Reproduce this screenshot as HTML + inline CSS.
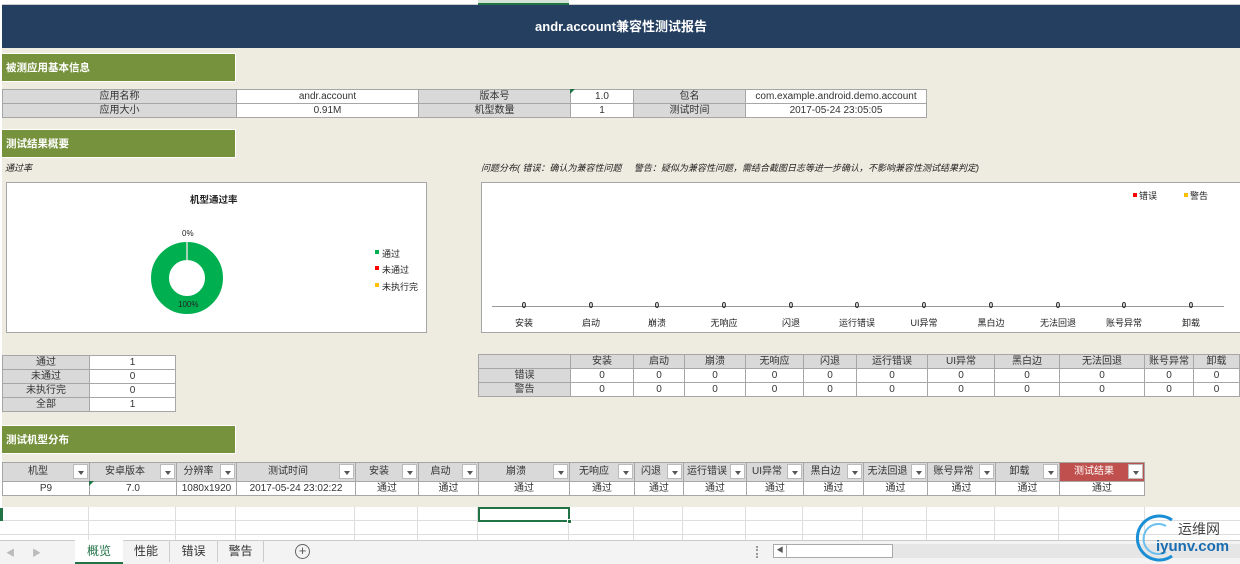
<!DOCTYPE html>
<html><head><meta charset="utf-8"><style>
*{margin:0;padding:0;box-sizing:border-box}
body{width:1240px;height:564px;background:#eeebe0;position:relative;overflow:hidden;font-family:"Liberation Sans","Noto Sans CJK SC",sans-serif;font-size:10px;color:#333}
.a{position:absolute}
.c{position:absolute;text-align:center;line-height:13px;white-space:nowrap;overflow:hidden;border:1px solid #a6a6a6}
.g{background:#d9d9d9}
.w{background:#fff}
.gb{position:absolute;background:#76923c;color:#fff;font-weight:bold;font-size:10.5px;line-height:28px;padding-left:4px;border:1px solid #fff;border-left:none}
.h{position:absolute;background:#d9d9d9;border:1px solid #a6a6a6;line-height:17px;font-size:10px;text-align:center;white-space:nowrap;overflow:hidden;padding-right:16px}
.dd{position:absolute;right:1px;top:1px;width:15px;height:15px;background:#fff;border:1px solid #bbb}
.dd:after{content:"";position:absolute;left:4px;top:6px;border-left:3px solid transparent;border-right:3px solid transparent;border-top:4px solid #555}
.d{position:absolute;background:#fff;border:1px solid #a6a6a6;line-height:13px;text-align:center;font-size:10px}
.lab{position:absolute;font-size:9px;color:#222;text-align:center;width:60px}
</style></head><body>
<!-- column header strip -->
<div class="a" style="left:0;top:0;width:1240px;height:5px;background:#fff;border-bottom:1px solid #ccc"></div>
<div class="a" style="left:478px;top:0;width:91px;height:5px;background:#d3e4d6;border-bottom:2px solid #217346"></div>
<!-- title -->
<div class="a" style="left:2px;top:5px;width:1238px;height:43px;background:#243f60;color:#fff;font-weight:bold;font-size:13px;line-height:43px;text-align:center">andr.account兼容性测试报告</div>
<div class="a" style="left:0;top:0;width:2px;height:564px;background:#fff"></div>

<div class="gb" style="left:2px;top:53px;width:234px;height:29px">被测应用基本信息</div>
<div class="c g" style="left:2px;top:89px;width:235px;height:15px">应用名称</div>
<div class="c w" style="left:236px;top:89px;width:183px;height:15px">andr.account</div>
<div class="c g" style="left:418px;top:89px;width:153px;height:15px">版本号</div>
<div class="c w" style="left:570px;top:89px;width:64px;height:15px">1.0</div>
<div class="c g" style="left:633px;top:89px;width:113px;height:15px">包名</div>
<div class="c w" style="left:745px;top:89px;width:182px;height:15px">com.example.android.demo.account</div>
<div class="c g" style="left:2px;top:103px;width:235px;height:15px">应用大小</div>
<div class="c w" style="left:236px;top:103px;width:183px;height:15px">0.91M</div>
<div class="c g" style="left:418px;top:103px;width:153px;height:15px">机型数量</div>
<div class="c w" style="left:570px;top:103px;width:64px;height:15px">1</div>
<div class="c g" style="left:633px;top:103px;width:113px;height:15px">测试时间</div>
<div class="c w" style="left:745px;top:103px;width:182px;height:15px">2017-05-24 23:05:05</div>

<div class="gb" style="left:2px;top:129px;width:234px;height:29px">测试结果概要</div>
<div class="a" style="left:5px;top:161px;font-size:9px;font-style:italic;color:#222">通过率</div>
<div class="a" style="left:481px;top:161px;font-size:9px;font-style:italic;color:#222">问题分布( 错误：确认为兼容性问题 &nbsp;&nbsp;&nbsp; 警告：疑似为兼容性问题，需结合截图日志等进一步确认，不影响兼容性测试结果判定)</div>

<!-- pie chart -->
<div class="a" style="left:6px;top:182px;width:421px;height:151px;background:#fff;border:1px solid #a6a6a6"></div>
<div class="a" style="left:190px;top:192px;font-size:9.5px;font-weight:bold;color:#222">机型通过率</div>
<svg class="a" style="left:140px;top:225px" width="100" height="100">
<circle cx="47" cy="53" r="27" fill="none" stroke="#00b050" stroke-width="18"/>
<line x1="47" y1="17" x2="47" y2="35" stroke="#ddd" stroke-width="1.5"/>
</svg>
<div class="a" style="left:182px;top:229px;font-size:8px;color:#222">0%</div>
<div class="a" style="left:178px;top:300px;font-size:8px;color:#222">100%</div>
<div class="a" style="left:375px;top:250px;width:4px;height:4px;background:#00b050"></div>
<div class="a" style="left:382px;top:247px;font-size:9px;color:#222">通过</div>
<div class="a" style="left:375px;top:266px;width:4px;height:4px;background:#f00"></div>
<div class="a" style="left:382px;top:263px;font-size:9px;color:#222">未通过</div>
<div class="a" style="left:375px;top:283px;width:4px;height:4px;background:#ffc000"></div>
<div class="a" style="left:382px;top:280px;font-size:9px;color:#222">未执行完</div>

<!-- bar chart -->
<div class="a" style="left:481px;top:182px;width:759px;height:151px;background:#fff;border:1px solid #a6a6a6;border-right:none"></div>
<div class="a" style="left:1133px;top:193px;width:4px;height:4px;background:#f00"></div>
<div class="a" style="left:1139px;top:189px;font-size:9px;color:#222">错误</div>
<div class="a" style="left:1184px;top:193px;width:4px;height:4px;background:#ffc000"></div>
<div class="a" style="left:1190px;top:189px;font-size:9px;color:#222">警告</div>
<div class="a" style="left:492px;top:306px;width:732px;height:1px;background:#999"></div>
<div class="lab" style="left:494px;top:301px;font-size:8px;font-weight:bold">0</div><div class="lab" style="left:494px;top:316px">安装</div>
<div class="lab" style="left:561px;top:301px;font-size:8px;font-weight:bold">0</div><div class="lab" style="left:561px;top:316px">启动</div>
<div class="lab" style="left:627px;top:301px;font-size:8px;font-weight:bold">0</div><div class="lab" style="left:627px;top:316px">崩溃</div>
<div class="lab" style="left:694px;top:301px;font-size:8px;font-weight:bold">0</div><div class="lab" style="left:694px;top:316px">无响应</div>
<div class="lab" style="left:761px;top:301px;font-size:8px;font-weight:bold">0</div><div class="lab" style="left:761px;top:316px">闪退</div>
<div class="lab" style="left:827px;top:301px;font-size:8px;font-weight:bold">0</div><div class="lab" style="left:827px;top:316px">运行错误</div>
<div class="lab" style="left:894px;top:301px;font-size:8px;font-weight:bold">0</div><div class="lab" style="left:894px;top:316px">UI异常</div>
<div class="lab" style="left:961px;top:301px;font-size:8px;font-weight:bold">0</div><div class="lab" style="left:961px;top:316px">黑白边</div>
<div class="lab" style="left:1028px;top:301px;font-size:8px;font-weight:bold">0</div><div class="lab" style="left:1028px;top:316px">无法回退</div>
<div class="lab" style="left:1094px;top:301px;font-size:8px;font-weight:bold">0</div><div class="lab" style="left:1094px;top:316px">账号异常</div>
<div class="lab" style="left:1161px;top:301px;font-size:8px;font-weight:bold">0</div><div class="lab" style="left:1161px;top:316px">卸载</div>

<!-- left small table -->
<div class="c g" style="left:2px;top:355px;width:88px;height:15px">通过</div><div class="c w" style="left:89px;top:355px;width:87px;height:15px">1</div>
<div class="c g" style="left:2px;top:369px;width:88px;height:15px">未通过</div><div class="c w" style="left:89px;top:369px;width:87px;height:15px">0</div>
<div class="c g" style="left:2px;top:383px;width:88px;height:15px">未执行完</div><div class="c w" style="left:89px;top:383px;width:87px;height:15px">0</div>
<div class="c g" style="left:2px;top:397px;width:88px;height:15px">全部</div><div class="c w" style="left:89px;top:397px;width:87px;height:15px">1</div>

<!-- right table -->
<div class="c g" style="left:478px;top:354px;width:93px;height:15px"></div>
<div class="c g" style="left:570px;top:354px;width:64px;height:15px">安装</div>
<div class="c g" style="left:633px;top:354px;width:52px;height:15px">启动</div>
<div class="c g" style="left:684px;top:354px;width:62px;height:15px">崩溃</div>
<div class="c g" style="left:745px;top:354px;width:59px;height:15px">无响应</div>
<div class="c g" style="left:803px;top:354px;width:54px;height:15px">闪退</div>
<div class="c g" style="left:856px;top:354px;width:72px;height:15px">运行错误</div>
<div class="c g" style="left:927px;top:354px;width:68px;height:15px">UI异常</div>
<div class="c g" style="left:994px;top:354px;width:66px;height:15px">黑白边</div>
<div class="c g" style="left:1059px;top:354px;width:86px;height:15px">无法回退</div>
<div class="c g" style="left:1144px;top:354px;width:50px;height:15px">账号异常</div>
<div class="c g" style="left:1193px;top:354px;width:47px;height:15px">卸载</div>

<div class="c g" style="left:478px;top:368px;width:93px;height:15px">错误</div>
<div class="c w" style="left:570px;top:368px;width:64px;height:15px">0</div>
<div class="c w" style="left:633px;top:368px;width:52px;height:15px">0</div>
<div class="c w" style="left:684px;top:368px;width:62px;height:15px">0</div>
<div class="c w" style="left:745px;top:368px;width:59px;height:15px">0</div>
<div class="c w" style="left:803px;top:368px;width:54px;height:15px">0</div>
<div class="c w" style="left:856px;top:368px;width:72px;height:15px">0</div>
<div class="c w" style="left:927px;top:368px;width:68px;height:15px">0</div>
<div class="c w" style="left:994px;top:368px;width:66px;height:15px">0</div>
<div class="c w" style="left:1059px;top:368px;width:86px;height:15px">0</div>
<div class="c w" style="left:1144px;top:368px;width:50px;height:15px">0</div>
<div class="c w" style="left:1193px;top:368px;width:47px;height:15px">0</div>

<div class="c g" style="left:478px;top:382px;width:93px;height:15px">警告</div>
<div class="c w" style="left:570px;top:382px;width:64px;height:15px">0</div>
<div class="c w" style="left:633px;top:382px;width:52px;height:15px">0</div>
<div class="c w" style="left:684px;top:382px;width:62px;height:15px">0</div>
<div class="c w" style="left:745px;top:382px;width:59px;height:15px">0</div>
<div class="c w" style="left:803px;top:382px;width:54px;height:15px">0</div>
<div class="c w" style="left:856px;top:382px;width:72px;height:15px">0</div>
<div class="c w" style="left:927px;top:382px;width:68px;height:15px">0</div>
<div class="c w" style="left:994px;top:382px;width:66px;height:15px">0</div>
<div class="c w" style="left:1059px;top:382px;width:86px;height:15px">0</div>
<div class="c w" style="left:1144px;top:382px;width:50px;height:15px">0</div>
<div class="c w" style="left:1193px;top:382px;width:47px;height:15px">0</div>

<div class="gb" style="left:2px;top:425px;width:234px;height:29px">测试机型分布</div>

<!-- bottom table header -->
<div class="h" style="left:2px;top:462px;width:88px;height:20px">机型<span class="dd"></span></div>
<div class="h" style="left:89px;top:462px;width:88px;height:20px">安卓版本<span class="dd"></span></div>
<div class="h" style="left:176px;top:462px;width:61px;height:20px">分辨率<span class="dd"></span></div>
<div class="h" style="left:236px;top:462px;width:120px;height:20px">测试时间<span class="dd"></span></div>
<div class="h" style="left:355px;top:462px;width:64px;height:20px">安装<span class="dd"></span></div>
<div class="h" style="left:418px;top:462px;width:61px;height:20px">启动<span class="dd"></span></div>
<div class="h" style="left:478px;top:462px;width:92px;height:20px">崩溃<span class="dd"></span></div>
<div class="h" style="left:569px;top:462px;width:66px;height:20px">无响应<span class="dd"></span></div>
<div class="h" style="left:634px;top:462px;width:50px;height:20px">闪退<span class="dd"></span></div>
<div class="h" style="left:683px;top:462px;width:64px;height:20px">运行错误<span class="dd"></span></div>
<div class="h" style="left:746px;top:462px;width:58px;height:20px">UI异常<span class="dd"></span></div>
<div class="h" style="left:803px;top:462px;width:61px;height:20px">黑白边<span class="dd"></span></div>
<div class="h" style="left:863px;top:462px;width:65px;height:20px">无法回退<span class="dd"></span></div>
<div class="h" style="left:927px;top:462px;width:69px;height:20px">账号异常<span class="dd"></span></div>
<div class="h" style="left:995px;top:462px;width:65px;height:20px">卸载<span class="dd"></span></div>
<div class="h" style="left:1059px;top:462px;width:86px;height:20px;background:#c0504d;color:#fff">测试结果<span class="dd"></span></div>

<div class="d" style="left:2px;top:481px;width:88px;height:15px">P9</div>
<div class="d" style="left:89px;top:481px;width:88px;height:15px">7.0</div>
<div class="d" style="left:176px;top:481px;width:61px;height:15px">1080x1920</div>
<div class="d" style="left:236px;top:481px;width:120px;height:15px">2017-05-24 23:02:22</div>
<div class="d" style="left:355px;top:481px;width:64px;height:15px">通过</div>
<div class="d" style="left:418px;top:481px;width:61px;height:15px">通过</div>
<div class="d" style="left:478px;top:481px;width:92px;height:15px">通过</div>
<div class="d" style="left:569px;top:481px;width:66px;height:15px">通过</div>
<div class="d" style="left:634px;top:481px;width:50px;height:15px">通过</div>
<div class="d" style="left:683px;top:481px;width:64px;height:15px">通过</div>
<div class="d" style="left:746px;top:481px;width:58px;height:15px">通过</div>
<div class="d" style="left:803px;top:481px;width:61px;height:15px">通过</div>
<div class="d" style="left:863px;top:481px;width:65px;height:15px">通过</div>
<div class="d" style="left:927px;top:481px;width:69px;height:15px">通过</div>
<div class="d" style="left:995px;top:481px;width:65px;height:15px">通过</div>
<div class="d" style="left:1059px;top:481px;width:86px;height:15px">通过</div>
<div class="a" style="left:89px;top:481px;width:0;height:0;border-top:5px solid #217346;border-right:5px solid transparent"></div>
<div class="a" style="left:570px;top:89px;width:0;height:0;border-top:5px solid #217346;border-right:5px solid transparent"></div>

<!-- empty grid rows -->
<div class="a" style="left:0;top:507px;width:1240px;height:33px;background:#fff;
background-image:linear-gradient(#ddd 1px,transparent 1px);background-size:100% 14px;background-position:0 13px"></div>
<div class="a" style="left:0;top:507px;width:1240px;height:33px;background:
linear-gradient(90deg,transparent 88px,#ddd 88px,#ddd 89px,transparent 89px,transparent 175px,#ddd 175px,#ddd 176px,transparent 176px,transparent 235px,#ddd 235px,#ddd 236px,transparent 236px,transparent 354px,#ddd 354px,#ddd 355px,transparent 355px,transparent 417px,#ddd 417px,#ddd 418px,transparent 418px,transparent 477px,#ddd 477px,#ddd 478px,transparent 478px,transparent 568px,#ddd 568px,#ddd 569px,transparent 569px,transparent 633px,#ddd 633px,#ddd 634px,transparent 634px,transparent 682px,#ddd 682px,#ddd 683px,transparent 683px,transparent 745px,#ddd 745px,#ddd 746px,transparent 746px,transparent 802px,#ddd 802px,#ddd 803px,transparent 803px,transparent 862px,#ddd 862px,#ddd 863px,transparent 863px,transparent 926px,#ddd 926px,#ddd 927px,transparent 927px,transparent 994px,#ddd 994px,#ddd 995px,transparent 995px,transparent 1058px,#ddd 1058px,#ddd 1059px,transparent 1059px,transparent 1144px,#ddd 1144px,#ddd 1145px,transparent 1145px)"></div>
<div class="a" style="left:0;top:508px;width:3px;height:13px;background:#217346"></div>
<div class="a" style="left:478px;top:507px;width:92px;height:15px;border:2px solid #217346"></div>
<div class="a" style="left:567px;top:519px;width:5px;height:5px;background:#217346;border:1px solid #fff"></div>

<!-- tab bar -->
<div class="a" style="left:0;top:540px;width:1240px;height:24px;background:#f3f3f3;border-top:1px solid #ccc"></div>
<div class="a" style="left:6px;top:546px;font-size:9px;color:#bbb">◀</div>
<div class="a" style="left:32px;top:546px;font-size:9px;color:#bbb">▶</div>
<div class="a" style="left:75px;top:540px;width:48px;height:24px;background:#fff;border-bottom:2px solid #217346;color:#217346;font-size:12px;text-align:center;line-height:22px">概览</div>
<div class="a" style="left:123px;top:540px;width:47px;height:22px;border-right:1px solid #ccc;font-size:12px;text-align:center;line-height:22px;color:#333">性能</div>
<div class="a" style="left:170px;top:540px;width:48px;height:22px;border-right:1px solid #ccc;font-size:12px;text-align:center;line-height:22px;color:#333">错误</div>
<div class="a" style="left:218px;top:540px;width:46px;height:22px;border-right:1px solid #ccc;font-size:12px;text-align:center;line-height:22px;color:#333">警告</div>
<div class="a" style="left:295px;top:544px;width:15px;height:15px;border:1px solid #666;border-radius:50%;text-align:center;line-height:12px;font-size:13px;color:#555">+</div>
<div class="a" style="left:756px;top:546px;width:2px;height:12px;border-left:2px dotted #999"></div>
<div class="a" style="left:773px;top:544px;width:467px;height:14px;background:#e6e6e6"></div>
<div class="a" style="left:773px;top:544px;width:120px;height:14px;background:#fff;border:1px solid #aaa"></div>
<div class="a" style="left:774px;top:545px;width:13px;height:12px;border-right:1px solid #aaa;font-size:7px;color:#555;text-align:center;line-height:12px">◀</div>

<!-- watermark -->
<svg class="a" style="left:1132px;top:512px" width="50" height="50"><path d="M40 8 A22 22 0 1 0 40 44" fill="none" stroke="#1a8fd6" stroke-width="3"/><path d="M34 14 A15 15 0 1 0 34 40" fill="none" stroke="#6cc0ee" stroke-width="2"/></svg>
<div class="a" style="left:1178px;top:519px;font-size:14px;color:#444">运维网</div>
<div class="a" style="left:1156px;top:538px;font-size:15px;font-weight:bold;color:#1a6db0">iyunv.com</div>
</body></html>
